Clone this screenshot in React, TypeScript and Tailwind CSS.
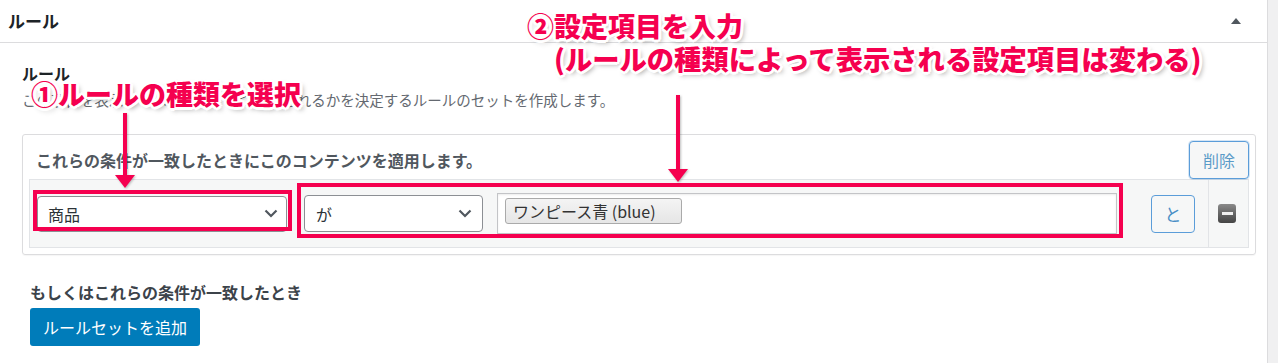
const outline =
  "[text-shadow:2px_0_0_#fff,-2px_0_0_#fff,0_2px_0_#fff,0_-2px_0_#fff,2px_2px_0_#fff,-2px_-2px_0_#fff,2px_-2px_0_#fff,-2px_2px_0_#fff,3px_0_0_#fff,-3px_0_0_#fff,0_3px_0_#fff,0_-3px_0_#fff,3px_3px_5px_rgba(0,0,0,0.35)]";

function Chevron() {
  return (
    <svg width="14" height="9" viewBox="0 0 14 9" className="shrink-0">
      <polyline points="1.5,1.5 7,7 12.5,1.5" fill="none" stroke="#50575e" strokeWidth="2.2" />
    </svg>
  );
}

function Arrow({ left, top, length }: { left: string; top: string; length: string }) {
  return (
    <div className={`absolute ${left} ${top} flex flex-col items-center drop-shadow-[1px_1px_1px_rgba(0,0,0,0.25)]`}>
      <div className={`w-[4px] ${length} bg-[#f5004f]`} />
      <div className="w-0 h-0 border-l-[10px] border-r-[10px] border-t-[13px] border-l-transparent border-r-transparent border-t-[#f5004f]" />
    </div>
  );
}

export default function App() {
  return (
    <div className="relative flex w-full h-[363px] bg-white overflow-hidden font-['Noto_Sans_CJK_JP','Noto_Sans',sans-serif]">
      {/* panel */}
      <div className="w-[1268px] h-full border-r border-[#dcdcde] shrink-0">
        <div className="h-[43px] border-b border-[#dcdcde] flex items-center justify-between pl-[8px] pr-[26px]">
          <h2 className="text-[17px] leading-[22px] font-bold text-[#1d2327]">ルール</h2>
          <div className="w-0 h-0 border-l-[5px] border-r-[5px] border-b-[6px] border-l-transparent border-r-transparent border-b-[#50575e]" />
        </div>

        <div className="pl-[22px] pr-[11px] pt-[19px]">
          <p className="text-[16px] leading-[22px] font-bold text-[#1d2327]">ルール</p>
          <p className="mt-[6px] text-[14.5px] leading-[20px] text-[#646970] whitespace-nowrap">
            この項目を表示するページや、いつ表示されるかを決定するルールのセットを作成します。
          </p>

          {/* rule group */}
          <div className="mt-[24px] border border-[#dcdcde] rounded-[3px] pt-[5px] px-[6px] pb-[6px] shadow-[0_1px_1px_rgba(0,0,0,0.04)]">
            <div className="flex items-center justify-between h-[39px]">
              <p className="pl-[7px] text-[16px] leading-[22px] font-bold text-[#50575e]">
                これらの条件が一致したときにこのコンテンツを適用します。
              </p>
              <button className="w-[60px] h-[38px] rounded-[4px] border border-[#5b9dd9] bg-[#f6f7f7] text-[16px] leading-none text-[#5a9bc8] shadow-[0_0_0_1px_rgba(91,157,217,0.25)]">
                削除
              </button>
            </div>

            <div className="flex items-center h-[69px] border border-[#e2e4e7] bg-[#f6f7f7]">
              <div className="ml-[7px] w-[250px] h-[36px] bg-white border border-[#8c8f94] rounded-[4px] flex items-center justify-between pl-[10px] pr-[8px]">
                <span className="text-[16px] leading-none text-[#2c3338]">商品</span>
                <Chevron />
              </div>
              <div className="ml-[17px] w-[179px] h-[37px] bg-white border border-[#8c8f94] rounded-[4px] flex items-center justify-between pl-[11px] pr-[10px]">
                <span className="text-[16px] leading-none text-[#2c3338]">が</span>
                <Chevron />
              </div>
              <div className="ml-[14px] w-[620px] h-[41px] bg-white border border-[#c3c4c7] shadow-[inset_0_1px_2px_rgba(0,0,0,0.08)] flex items-start pt-[4px] pl-[7px]">
                <span className="h-[26px] flex items-center pl-[7px] pr-[25px] rounded-[3px] border border-[#aaaaaa] bg-gradient-to-b from-[#f4f4f4] to-[#e6e6e6] text-[16px] leading-none text-[#333]">
                  ワンピース青 (blue)
                </span>
              </div>
              <button className="ml-[34px] w-[44px] h-[38px] rounded-[4px] border border-[#5b9dd9] bg-[#f6f7f7] text-[17px] leading-none text-[#4a8fc6]">
                と
              </button>
              <div className="ml-[13px] self-stretch w-[40px] border-l border-[#e2e4e7] flex items-center justify-center pr-[3px]">
                <div className="w-[18px] h-[19px] rounded-[3px] bg-gradient-to-b from-[#8a8a8a] to-[#454545] flex items-center justify-center">
                  <div className="w-[11px] h-[3px] bg-white/90" />
                </div>
              </div>
            </div>
          </div>

          <div className="pl-[8px] mt-[26px]">
            <p className="text-[16px] leading-[22px] font-bold text-[#3c434a]">もしくはこれらの条件が一致したとき</p>
            <button className="mt-[5px] h-[38px] px-[13px] rounded-[3px] bg-[#007cba] text-white text-[16px] leading-none">
              ルールセットを追加
            </button>
          </div>
        </div>
      </div>
      <div className="flex-1 bg-[#f0f0f1]" />

      {/* annotations */}
      <div className="absolute left-[33px] top-[190px] w-[259px] h-[41px] border-[4px] border-[#f5004f]" />
      <div className="absolute left-[297px] top-[183px] w-[826px] h-[55px] border-[4px] border-[#f5004f]" />
      <Arrow left="left-[115px]" top="top-[113px]" length="h-[62px]" />
      <Arrow left="left-[668px]" top="top-[95px]" length="h-[74px]" />
      <div className={`absolute left-[31px] top-[80px] text-[27px] leading-[27px] font-black text-[#f5004f] whitespace-nowrap ${outline}`}>
        ①ルールの種類を選択
      </div>
      <div className={`absolute left-[527px] top-[12px] text-[27px] leading-[27px] font-black text-[#f5004f] whitespace-nowrap ${outline}`}>
        ②設定項目を入力
      </div>
      <div className={`absolute left-[554px] top-[44px] text-[27.3px] leading-[28px] font-black text-[#f5004f] whitespace-nowrap ${outline}`}>
        (ルールの種類によって表示される設定項目は変わる)
      </div>
    </div>
  );
}
